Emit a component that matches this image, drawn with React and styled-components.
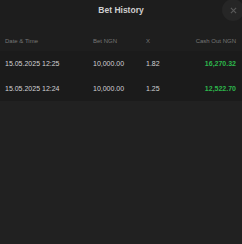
import React from 'react';
import styled, { createGlobalStyle } from 'styled-components';

const Global = createGlobalStyle`
  html, body {
    margin: 0;
    padding: 0;
    background: #212121;
    font-family: Arial, "Liberation Sans", sans-serif;
  }
`

const Panel = styled.div`
  width: 242px;
  height: 244px;
  background: #212121;
  display: flex;
  flex-direction: column;
  overflow: hidden;
`

const Header = styled.div`
  position: relative;
  height: 20px;
  display: flex;
  align-items: center;
  justify-content: center;
  background: #1d1d1d;
`

const Title = styled.div`
  color: #cfcfcf;
  font-size: 8.5px;
  font-weight: 700;
`

const Close = styled.button`
  position: absolute;
  right: -2px;
  top: -1px;
  width: 22px;
  height: 22px;
  border: 0;
  border-radius: 50%;
  background: #262626;
  display: flex;
  align-items: center;
  justify-content: center;
  padding: 0;
`

const Table = styled.div`
  display: flex;
  flex-direction: column;
`

const Row = styled.div`
  display: grid;
  grid-template-columns: 88px 53px 40px 1fr;
  align-items: ${p => p.head ? 'end' : 'center'};
  height: ${p => p.head ? '31px' : '25px'};
  box-sizing: border-box;
  padding: ${p => p.head ? '0 6px 7px 5px' : '0 6px 0 5px'};
  background: ${p => p.head ? '#1e1e1e' : '#1b1b1b'};
  font-size: ${p => p.head ? '6px' : '7px'};
  color: ${p => p.head ? '#767676' : '#d2d2d4'};
`

const Cell = styled.div`
  text-align: ${p => p.right ? 'right' : 'left'};
  color: ${p => p.green ? '#2db64b' : 'inherit'};
  font-weight: ${p => p.green ? 700 : 400};
  white-space: nowrap;
`

const bets = [
  { date: '15.05.2025', time: '12:25', bet: '10,000.00', x: '1.82', out: '16,270.32' },
  { date: '15.05.2025', time: '12:24', bet: '10,000.00', x: '1.25', out: '12,522.70' },
]

const App = () => (
  <>
    <Global />
    <Panel>
      <Header>
        <Title>Bet History</Title>
        <Close>
          <svg width="7" height="7" viewBox="0 0 8 8">
            <path d="M1 1 L7 7 M7 1 L1 7" stroke="#5a5a5a" strokeWidth="1.3" />
          </svg>
        </Close>
      </Header>
      <Table>
        <Row head>
          <Cell>Date &amp; Time</Cell>
          <Cell>Bet NGN</Cell>
          <Cell>X</Cell>
          <Cell right>Cash Out NGN</Cell>
        </Row>
        {bets.map(b => (
          <Row key={b.time}>
            <Cell>{b.date} {b.time}</Cell>
            <Cell>{b.bet}</Cell>
            <Cell>{b.x}</Cell>
            <Cell right green>{b.out}</Cell>
          </Row>
        ))}
      </Table>
    </Panel>
  </>
);

export default App;
